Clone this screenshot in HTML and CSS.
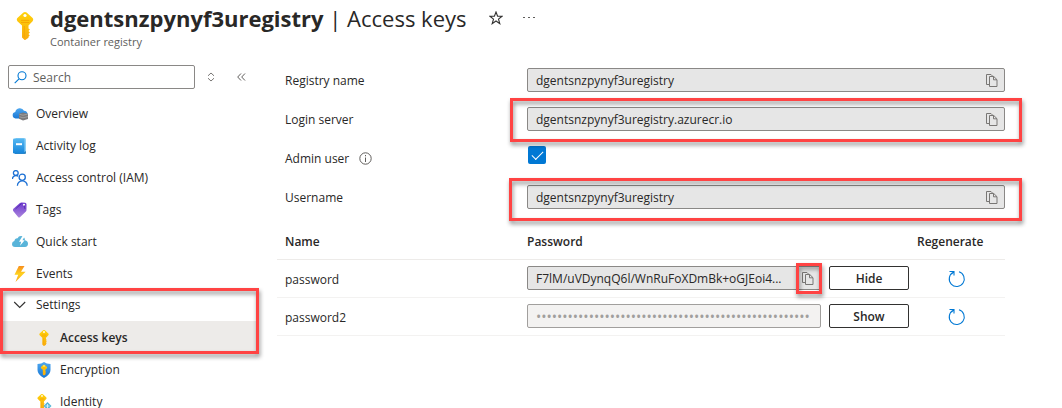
FILE: index.html
```html
<!DOCTYPE html>
<html lang="en">
<head>
<meta charset="utf-8">
<title>Access keys</title>
<link rel="stylesheet" href="styles.css">
</head>
<body>
<svg class="sprite" aria-hidden="true">
  <defs>
    <linearGradient id="gold" x1="0" y1="0" x2="0" y2="1"><stop offset="0" stop-color="#ffd20a"/><stop offset="1" stop-color="#f9ab10"/></linearGradient>
    <linearGradient id="blue" x1="0" y1="0" x2="0" y2="1"><stop offset="0" stop-color="#4fa8f0"/><stop offset="1" stop-color="#1877d4"/></linearGradient>
    <linearGradient id="book" x1="0" y1="0" x2="0" y2="1"><stop offset="0" stop-color="#55b8f2"/><stop offset="1" stop-color="#1584da"/></linearGradient>
    <linearGradient id="violet" x1="0" y1="0" x2="0" y2="1"><stop offset="0" stop-color="#6a35cf"/><stop offset="1" stop-color="#ab86dc"/></linearGradient>
    <linearGradient id="flash" x1="0" y1="0" x2="0" y2="1"><stop offset="0" stop-color="#f78d1e"/><stop offset=".5" stop-color="#ffd21c"/><stop offset="1" stop-color="#f9a51e"/></linearGradient>
  </defs>
  <symbol id="key" viewBox="0 0 18 28">
    <path fill="url(#gold)" d="M7.4.6q1.6-1.1 3.2 0l6 5.4q1.2 1.6 0 3.2l-4.1 4.3v2.9l1.4 1.1-1.4 1.500 1.400 1.500-1.400 1.500 1.200 1.400-1.200 1.300v1L9.200 28H8.600L6 25.500v-12L1.400 9.200q-1.200-1.600 0-3.200z"/>
    <circle cx="9" cy="3.500" r="1.600" fill="#fff"/>
    <path d="M5 8.400h8.200M5 10.500h8.200" stroke="#f5a000" stroke-width=".8"/>
    <path d="M8.300 14v11.500" stroke="#f5a300" stroke-width=".8"/>
  </symbol>
  <symbol id="copy" viewBox="0 0 12 13">
    <path d="M3.500 10.500h-3V.500h4.500L6.500 2M3.500 2.500h4.300l3.200 3.200v6.800H3.500zM7.500 2.500v3.300h3.500" fill="none" stroke="#797775"/>
  </symbol>
  <symbol id="refresh" viewBox="0 0 18 18">
    <path d="M5.300 2.300A7.500 7.500 0 1 0 11 1.800M1.500 1.500h4.500v4M6 1.500L3.500 4" fill="none" stroke="#0078d4" stroke-width="1.100"/>
  </symbol>
</svg>

<header class="page-header">
  <svg class="header-key"><use href="#key"/></svg>
  <div class="heading">
    <div class="title-row">
      <h1 class="title"><b>dgentsnzpynyf3uregistry</b> | Access keys</h1>
      <button class="icon-button" aria-label="Favorite"><svg width="14" height="14" viewBox="0 0 14 14"><path d="M7 1l1.600 4.200 4.400.1-3.500 2.800L10.800 12.600 7 10 3.200 12.600 4.500 8.100 1 5.300l4.400-.1z" fill="none" stroke="#323130" stroke-width="1.100"/></svg></button>
      <button class="icon-button more" aria-label="More"><svg width="12" height="2" viewBox="0 0 12 2"><path d="M0 0h2v1H0zM5 0h2v1H5zM10 0h2v1h-2z" fill="#605e5c"/></svg></button>
    </div>
    <p class="subtitle">Container registry</p>
  </div>
</header>

<div class="layout">
  <nav class="sidebar" aria-label="Registry">
    <div class="search-row">
      <label class="search">
        <svg width="13" height="13" viewBox="0 0 13 13"><circle cx="8" cy="4.800" r="4" fill="none" stroke="#0078d4" stroke-width="1.100"/><path d="M5 7.800L.700 12.200" stroke="#0078d4" stroke-width="1.100"/></svg>
        <input class="search-input" type="search" placeholder="Search" aria-label="Search">
      </label>
      <button class="icon-button sort" aria-label="Expand all"><svg width="8" height="10" viewBox="0 0 8 10"><path d="M1 3.800L4 1l3 2.800M1 6.200L4 9l3-2.800" fill="none" stroke="#797775"/></svg></button>
      <button class="icon-button collapse" aria-label="Collapse menu"><svg width="9" height="8" viewBox="0 0 9 8"><path d="M4 .500L.700 4 4 7.500M8 .500L4.700 4 8 7.500" fill="none" stroke="#605e5c"/></svg></button>
    </div>
    <ul class="menu">
      <li><a class="item" href="#"><svg class="icon" viewBox="0 0 16 16"><path fill="url(#blue)" d="M3.500 12.500A3.300 3.300 0 0 1 3.300 6 4.600 4.600 0 0 1 12 4.800a3.800 3.800 0 0 1 3.600 3.700q0 4-4 4z"/><path fill="#7a7a7c" d="M7 7.800l4-1.300 5 1.200v5.300l-5 1.500-4-1.800z"/><path d="M7.500 8.300l3.500.9 5-1.200M7.500 10.800l3.500 1 5-1.200" stroke="#a8a8a8" fill="none" stroke-width=".8"/></svg>Overview</a></li>
      <li><a class="item" href="#"><svg class="icon" viewBox="0 0 16 16"><path fill="#8ed0f5" d="M3.500 0h9q1.500 0 1.500 1.500v13H3z"/><path fill="#3487bf" d="M2 14h10.500l1.500-1v1.800q0 1.200-1 1.200H3z"/><rect x="1" y=".5" width="11.500" height="15" rx="1.200" fill="url(#book)"/><path fill="#fff" d="M4 5.200h6v2H4z"/></svg>Activity log</a></li>
      <li><a class="item" href="#"><svg class="icon" viewBox="0 0 16 16" fill="none" stroke="#1a6fd4" stroke-width="1.300"><circle cx="3.800" cy="3" r="2.400"/><path d="M.400 9A3.600 3.600 0 0 1 6.200 6.300"/><circle cx="10.200" cy="7.300" r="3.100"/><path d="M5.400 15.700a4.900 4.900 0 0 1 9.800 0"/></svg>Access control (IAM)</a></li>
      <li><a class="item" href="#"><svg class="icon" viewBox="0 0 16 16"><path fill="url(#violet)" d="M1.400 6.800L8 .900q.6-.5 1.500-.5l3.600.3q1.300.2 1.400 1.500V8q0 .8-.6 1.400l-6 5.800q-1 .8-1.800-.2L1.200 9q-.7-1.200.2-2.200z"/><circle cx="12" cy="2.900" r="1.100" fill="#fff"/><path d="M3.500 7l6-5.500M12 3l1 4" stroke="#4c24a3" stroke-width=".7"/></svg>Tags</a></li>
      <li><a class="item" href="#"><svg class="icon" viewBox="0 0 16 16"><path fill="#59b4d9" d="M3 13Q0 12.800 0 9.900q0-2.400 2.400-2.800.2-3 3.200-2.900Q6.500 2 9 2q3.600 0 4 4.200 3 .6 3 3.500T13 13z"/><path fill="#fff" d="M10.500 2L7 7.800h2.200L8 11.800l4.700-5.600h-2.300L13 2z"/></svg>Quick start</a></li>
      <li><a class="item" href="#"><svg class="icon" viewBox="0 0 16 16"><path fill="url(#flash)" d="M6.800 0h5.700L9 5.800h4.600L3.500 16l2.700-7.200H2.500z"/></svg>Events</a></li>
    </ul>
    <div class="group">
      <button class="item group-toggle" aria-expanded="true"><svg class="icon" viewBox="0 0 16 16"><path d="M2.200 5l5.500 5.500L13.200 5" fill="none" stroke="#323130" stroke-width="1.100"/></svg>Settings</button>
      <a class="item sub selected" href="#" aria-current="page"><svg class="icon"><use href="#key"/></svg>Access keys</a>
      <span class="mark mark-group"></span>
    </div>
    <ul class="menu">
      <li><a class="item sub" href="#"><svg class="icon" viewBox="0 0 16 16"><path fill="url(#blue)" d="M8 0q2.500 1.900 6.500 2v6q0 4.700-6.500 8-6.500-3.300-6.500-8V2q4-.1 6.500-2z"/><use href="#key" x="4.500" y="2.500" width="7" height="11"/></svg>Encryption</a></li>
      <li><a class="item sub" href="#"><svg class="icon" viewBox="0 0 16 16"><use href="#key" x="1" y="0" width="10" height="15.500"/><path d="M11.500 8l4 4-4 4-4-4z" fill="#54b5d8"/><path d="M9.500 12h4M11.500 10v4" stroke="#d8f1fb" stroke-width=".9"/></svg>Identity</a></li>
    </ul>
  </nav>

  <main class="content">
    <form class="fields">
      <div class="row">
        <label for="registry">Registry name</label>
        <div class="field"><input id="registry" readonly value="dgentsnzpynyf3uregistry"><button type="button" class="copy" aria-label="Copy"><svg><use href="#copy"/></svg></button></div>
      </div>
      <div class="row">
        <label for="login">Login server</label>
        <div class="field"><input id="login" readonly value="dgentsnzpynyf3uregistry.azurecr.io"><button type="button" class="copy" aria-label="Copy"><svg><use href="#copy"/></svg></button><span class="mark mark-login"></span></div>
      </div>
      <div class="row">
        <div class="label-info"><label for="admin">Admin user</label><svg width="13" height="13" viewBox="0 0 13 13"><circle cx="6.500" cy="6.500" r="5.700" fill="none" stroke="#605e5c"/><path d="M6.500 5.500V10M6.500 3v1.300" stroke="#605e5c"/></svg></div>
        <input id="admin" class="check" type="checkbox" checked>
      </div>
      <div class="row">
        <label for="user">Username</label>
        <div class="field"><input id="user" readonly value="dgentsnzpynyf3uregistry"><button type="button" class="copy" aria-label="Copy"><svg><use href="#copy"/></svg></button><span class="mark mark-user"></span></div>
      </div>
    </form>

    <table class="keys">
      <thead>
        <tr><th class="col-name">Name</th><th class="col-password">Password</th><th class="col-regen">Regenerate</th></tr>
      </thead>
      <tbody>
        <tr>
          <td><label for="pw1">password</label></td>
          <td class="secret-cell"><div class="secret">
            <div class="field"><input id="pw1" readonly value="F7lM/uVDynqQ6l/WnRuFoXDmBk+oGJEoi4..."><button type="button" class="copy" aria-label="Copy"><svg><use href="#copy"/></svg><span class="mark mark-copy"></span></button></div>
            <button class="toggle">Hide</button>
          </div></td>
          <td class="regen"><button class="icon-button" aria-label="Regenerate password"><svg width="18" height="18"><use href="#refresh"/></svg></button></td>
        </tr>
        <tr>
          <td><label for="pw2">password2</label></td>
          <td class="secret-cell"><div class="secret">
            <div class="field masked"><input id="pw2" type="password" disabled value="0000000000000000000000000000000000000000000000000000"></div>
            <button class="toggle">Show</button>
          </div></td>
          <td class="regen"><button class="icon-button" aria-label="Regenerate password2"><svg width="18" height="18"><use href="#refresh"/></svg></button></td>
        </tr>
      </tbody>
    </table>
  </main>
</div>
</body>
</html>
```
FILE: styles.css
```css
* { box-sizing: border-box; }

body {
  margin: 0;
  height: 100vh;
  overflow: hidden;
  background: #fff;
  color: #292827;
  font: 12px/20px "Open Sans", "Noto Sans", sans-serif;
}

button, input { font: inherit; color: inherit; }
button { cursor: pointer; }
ul { margin: 0; padding: 0; list-style: none; }

.sprite { position: absolute; width: 0; height: 0; }

.page-header {
  display: flex;
  gap: 16px;
  height: 65px;
  padding: 4px 16px 0;
}
.header-key { width: 18px; height: 28px; margin-top: 8px; }
.title-row { display: flex; align-items: center; height: 28px; }
.title { margin: 0; font-size: 22px; line-height: 28px; font-weight: 400; white-space: nowrap; }
.title b { font-weight: 700; }
.subtitle { margin: 0; font-size: 11px; color: #605e5c; }

.icon-button {
  display: inline-flex;
  align-items: center;
  justify-content: center;
  padding: 0;
  border: 0;
  background: none;
}
.title-row .icon-button { margin-left: 22px; }
.title-row .more { margin-left: 20px; }

.layout { display: flex; }

.sidebar { flex: none; width: 259px; }
.search-row { display: flex; align-items: center; padding-left: 8px; margin-bottom: 8px; }
.search {
  display: flex;
  align-items: center;
  gap: 6px;
  width: 187px;
  height: 24px;
  padding: 0 5px;
  border: 1px solid #8a8886;
  border-radius: 2px;
}
.search-input { min-width: 0; flex: 1; padding: 2px 0 0; border: 0; outline: 0; background: none; }
.search-input::placeholder { color: #605e5c; opacity: 1; }
.sort { margin-left: 12px; }
.collapse { margin-left: 22px; }

.item {
  display: flex;
  align-items: center;
  gap: 8px;
  width: 100%;
  height: 32px;
  padding: 1px 0 0 12px;
  border: 0;
  background: none;
  color: #292827;
  text-align: left;
  text-decoration: none;
}
.icon { flex: none; width: 16px; height: 16px; }
.sub { padding-left: 36px; }
.selected { background: #edebe9; font-weight: 600; }
.group { position: relative; }
.group-toggle { padding-top: 0; }

.content { flex: 1; min-width: 0; padding: 3px 57px 0 18px; }

.row {
  display: grid;
  grid-template-columns: 242px 1fr;
  align-items: center;
  height: 24px;
  margin-bottom: 15px;
  padding-left: 8px;
}
.row label { padding-top: 2px; }
.label-info { display: flex; align-items: center; gap: 10px; }

.field {
  position: relative;
  display: flex;
  flex: 1;
  min-width: 0;
  height: 24px;
  border: 1px solid #8a8886;
  border-radius: 2px;
  background: #e6e6e6;
}
.field input {
  flex: 1;
  min-width: 0;
  padding: 2px 0 0 8px;
  border: 0;
  outline: 0;
  background: none;
  text-overflow: ellipsis;
}
.masked { background: #f3f2f1; border-color: #a19f9d; }
.masked input { color: #a19f9d; font-size: 14px; }
.copy {
  position: relative;
  display: flex;
  align-items: center;
  justify-content: center;
  width: 24px;
  padding: 0;
  border: 0;
  background: none;
}
.copy svg { width: 12px; height: 13px; }

.check {
  appearance: none;
  display: grid;
  place-items: center;
  width: 18px;
  height: 18px;
  margin: 0 0 6px 1px;
  border-radius: 2px;
  background: #0078d4;
}
.check::after {
  content: "";
  width: 10px;
  height: 5px;
  margin-bottom: 3px;
  border: solid #fff;
  border-width: 0 0 1px 1px;
  transform: rotate(-45deg);
}

.keys { width: 100%; table-layout: fixed; border-collapse: collapse; }
.keys th { height: 35px; padding: 1px 0 0; font-weight: 600; text-align: left; border-bottom: 1px solid #edebe9; }
.keys td { height: 38px; padding: 0; border-bottom: 1px solid #f3f2f1; }
.keys .col-name { width: 250px; padding-left: 8px; }
.keys td:first-child { padding: 3px 0 0 8px; }
.keys .col-regen { width: 96px; padding-left: 8px; }
.keys .regen { text-align: center; }
.regen .icon-button { vertical-align: middle; }
.secret { display: flex; gap: 8px; }
.toggle {
  width: 80px;
  height: 24px;
  padding: 2px 0 0;
  border: 1px solid #323130;
  border-radius: 2px;
  background: #fff;
  font-weight: 600;
  line-height: 20px;
}

/* Callout frames laid over the areas they point out */
.mark {
  position: absolute;
  border: 3px solid #ff4343;
  filter: drop-shadow(1px 3px 2px rgba(0, 0, 0, .45));
  pointer-events: none;
}
.mark-group { inset: -1px 0 -1px 0; }
.mark-login { inset: -10px -18px -12px -18px; }
.mark-user { inset: -8px -18px -13px -19px; }
.mark-copy { inset: -4px -2px -5px 0; }
```
